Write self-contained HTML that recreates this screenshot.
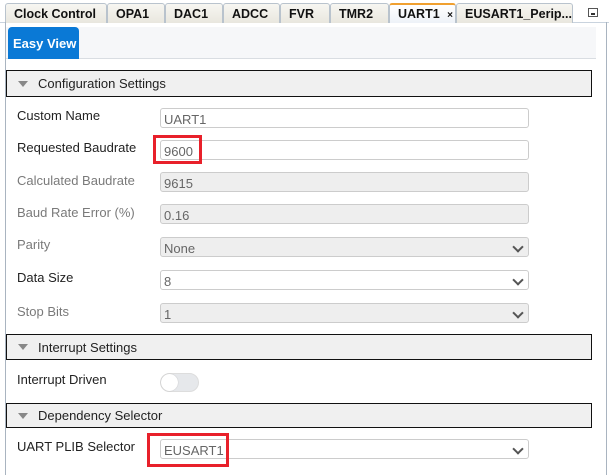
<!DOCTYPE html>
<html><head><meta charset="utf-8"><style>
*{margin:0;padding:0;box-sizing:border-box}
body{width:609px;height:475px;background:#fff;position:relative;overflow:hidden;font-family:"Liberation Sans",sans-serif}
.abs{position:absolute;white-space:nowrap}
.tabbar{left:0;top:0;width:609px;height:23px;background:#fff;border-bottom:1px solid #c9d3de}
.tab{position:absolute;top:3px;height:20px;background:linear-gradient(#f7f6f2,#e9e7df);border:1px solid #b9c3cd;border-bottom:none;border-radius:3px 3px 0 0;font:bold 12.5px "Liberation Sans",sans-serif;color:#111;padding:3px 0 0 8px;white-space:nowrap;overflow:hidden}
.tab.act{border-top:2px solid #f0a030;padding-top:2px;background:linear-gradient(#fff,#eef2f8)}
.frame{left:5px;top:22px;width:602px;height:453px;border-left:1px solid #a9b4c0;border-right:1px solid #a9b4c0}
.evbar{left:6px;top:27px;width:590px;height:32px;background:#f6f7f9;border-bottom:1px solid #d9dde2}
.ev{left:8px;top:27px;width:71px;height:32px;background:#0a79d6;border-radius:4px 4px 0 0;color:#fff;font:bold 13px "Liberation Sans",sans-serif;padding:9px 0 0 5px}
.sec{left:6px;width:586px;background:#f0f0f0;border:1px solid #111;font-size:13px;color:#222;padding-left:31px}
.sec:before{content:"";position:absolute;left:11px;top:50%;margin-top:-3px;border-left:5px solid transparent;border-right:5px solid transparent;border-top:6px solid #888}
.lbl{left:17px;font-size:13px;color:#222}
.lbl.d{color:#7a7a7a}
.in{left:160px;width:369px;height:20px;border:1px solid #ccc;border-radius:3px;background:#fff;font-size:13px;color:#666;padding:3px 0 0 3px}
.in.g{background:#eee}
.in.s:after{content:"";position:absolute;right:6px;top:5px;width:6px;height:6px;border-right:2px solid #555;border-bottom:2px solid #555;transform:rotate(45deg)}
.red{border:3px solid #e8202a}
</style></head><body>
<div class="abs tabbar"></div>
<div class="tab" style="left:5px;width:102px">Clock Control</div>
<div class="tab" style="left:107px;width:58px">OPA1</div>
<div class="tab" style="left:165px;width:58px">DAC1</div>
<div class="tab" style="left:223px;width:57px">ADCC</div>
<div class="tab" style="left:280px;width:50px">FVR</div>
<div class="tab" style="left:330px;width:59px">TMR2</div>
<div class="tab act" style="left:389px;width:67px">UART1 <span style="font-size:10px;margin-left:4px">×</span></div>
<div class="tab" style="left:456px;width:117px">EUSART1_Perip...</div>
<div class="abs" style="left:588px;top:8px;width:10px;height:9px;border:1px solid #555;background:#fff"><div style="position:absolute;left:2px;top:4px;width:4px;height:2px;background:#333"></div></div>
<div class="abs frame"></div>
<div class="abs evbar"></div>
<div class="abs ev">Easy View</div>

<div class="abs sec" style="top:70px;height:27px;padding-top:5px">Configuration Settings</div>

<div class="abs lbl" style="top:108px">Custom Name</div>
<div class="abs in" style="top:108px">UART1</div>
<div class="abs lbl" style="top:140px">Requested Baudrate</div>
<div class="abs in" style="top:140px">9600</div>
<div class="abs red" style="left:153px;top:135px;width:49px;height:29px"></div>
<div class="abs lbl d" style="top:173px">Calculated Baudrate</div>
<div class="abs in g" style="top:172px">9615</div>
<div class="abs lbl d" style="top:205px">Baud Rate Error (%)</div>
<div class="abs in g" style="top:204px">0.16</div>
<div class="abs lbl d" style="top:237px">Parity</div>
<div class="abs in g s" style="top:237px">None</div>
<div class="abs lbl" style="top:270px">Data Size</div>
<div class="abs in s" style="top:270px">8</div>
<div class="abs lbl d" style="top:304px">Stop Bits</div>
<div class="abs in g s" style="top:303px">1</div>

<div class="abs sec" style="top:334px;height:26px;padding-top:5px">Interrupt Settings</div>
<div class="abs lbl" style="top:372px">Interrupt Driven</div>
<div class="abs" style="left:160px;top:373px;width:39px;height:19px;border-radius:10px;background:#e6e8eb;border:1px solid #ddd"><div style="position:absolute;left:0;top:0;width:17px;height:17px;border-radius:50%;background:#fff;box-shadow:0 0 1px #aaa"></div></div>

<div class="abs sec" style="top:403px;height:25px;padding-top:4px">Dependency Selector</div>
<div class="abs lbl" style="top:439px">UART PLIB Selector</div>
<div class="abs in s" style="top:439px">EUSART1</div>
<div class="abs red" style="left:147px;top:433px;width:82px;height:34px"></div>
</body></html>
